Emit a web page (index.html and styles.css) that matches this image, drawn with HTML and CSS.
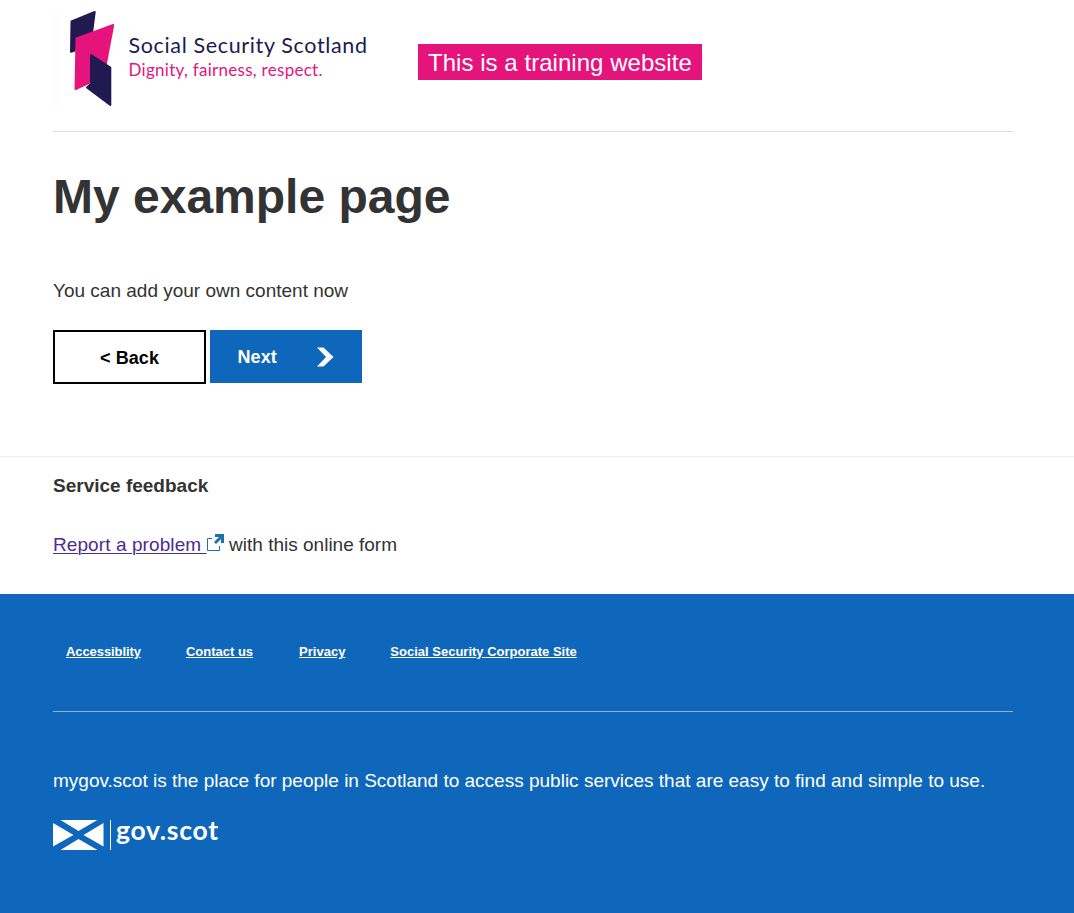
FILE: index.html
```html
<!DOCTYPE html>
<html lang="en">
<head>
<meta charset="utf-8">
<title>My example page</title>
<link rel="stylesheet" href="styles.css">
</head>
<body>
<header class="header wrapper">
  <svg class="logo" width="318" height="108" viewBox="53 0 318 108" role="img" aria-label="Social Security Scotland">
    <path class="panel" d="M53 10h8v98h-8z"/>
    <g stroke-linejoin="round" stroke-width="2">
      <path class="navy" d="M71.5 21.5 94.7 12 92 33 76 39.5 74.8 50.5 71 51.8z"/>
      <path class="pink" d="M76.5 38.5 113.2 25 105.5 66 91 82 75.5 89z"/>
      <path class="navy" d="M91 55 110.3 67.5V105L87 87.5 91 84z"/>
    </g>
    <text class="logo-name" x="128.5" y="52.5" textLength="238.500">Social Security Scotland</text>
    <text class="logo-tag" x="128.5" y="76" textLength="194">Dignity, fairness, respect.</text>
  </svg>
  <div class="banner">This is a training website</div>
</header>
<main class="main wrapper">
  <h1 class="title">My example page</h1>
  <p class="intro">You can add your own content now</p>
  <div class="buttons">
    <button class="button back">&lt; Back</button>
    <button class="button next">Next
      <svg class="chevron" width="17" height="20" viewBox="0 0 17 20"><path fill="#fff" d="M0 .5h6.500L16.500 10 6.500 19.500H0L9 10z"/></svg>
    </button>
  </div>
</main>
<section class="feedback">
  <div class="wrapper">
    <h2 class="feedback-title">Service feedback</h2>
    <p class="report"><a class="report-link" href="#">Report a problem </a><svg class="external" width="18" height="18" viewBox="0 0 18 18"><path fill="none" stroke="#1d70a8" d="M5 4.500H.5v12h12V12"/><path fill="#1d70a8" d="M8 0h9v9h-3V5l-5 5-2-2 5-5H8z"/></svg><span>with this online form</span></p>
  </div>
</section>
<footer class="footer">
  <div class="wrapper">
    <nav class="links">
      <a class="tight" href="#">Accessiblity</a>
      <a href="#">Contact us</a>
      <a href="#">Privacy</a>
      <a href="#">Social Security Corporate Site</a>
    </nav>
    <p class="about">mygov.scot is the place for people in Scotland to access public services that are easy to find and simple to use.</p>
    <svg class="gov" width="180" height="40" viewBox="53 812 180 40" role="img" aria-label="gov.scot">
      <path fill="#fff" d="M60.500 820H97.500L78.500 831zM60.500 850H97.500L78.500 839zM53 823 73.500 835 53 846.500zM103.500 823 83.500 835 103.500 846.500z"/>
      <path fill="#fff" d="M110 820h1v30h-1z"/>
      <text class="gov-name" x="116" y="840" textLength="102">gov.scot</text>
    </svg>
  </div>
</footer>
</body>
</html>
```
FILE: styles.css
```css
* { box-sizing: border-box; }
body {
  margin: 0;
  background: #fff;
  color: #333;
  font: 19px/28px "Liberation Sans", Arial, sans-serif;
}
h1, h2, p { margin: 0; }
.wrapper { width: 960px; margin-left: 53px; }

.header {
  display: flex;
  align-items: flex-start;
  gap: 47px;
  height: 132px;
  border-bottom: 1px solid #ddd;
}
.panel { fill: #fdfdfd; }
.navy { fill: #211a50; stroke: #211a50; }
.pink { fill: #e5147d; stroke: #e5147d; }
.logo-name { font: 21.5px Lato, sans-serif; fill: #211a50; }
.logo-tag { font: 17px Lato, sans-serif; fill: #e5147d; }
.banner {
  width: 284px;
  height: 36px;
  margin-top: 44px;
  padding-left: 10px;
  background: #e5147d;
  color: #fff;
  font-size: 24px;
  letter-spacing: 0.04px;
  line-height: 37px;
  white-space: nowrap;
}

.main { height: 324px; padding-top: 36px; }
.title { font-size: 48px; line-height: 58px; }
.intro { margin-top: 51px; }
.buttons { display: flex; gap: 4px; margin-top: 25px; }
.button {
  font: bold 18px "Liberation Sans", Arial, sans-serif;
  letter-spacing: 0.1px;
  padding: 0;
  border: 0;
  border-radius: 0;
}
.back { width: 153px; height: 54px; padding-top: 2px; border: 2px solid #000; background: #fff; color: #000; }
.next {
  display: flex;
  align-items: center;
  justify-content: space-between;
  width: 152px;
  height: 53px;
  padding: 2px 28px 0 27.5px;
  background: #0f67bb;
  color: #fff;
}
.chevron { margin-bottom: 2px; }

.feedback { height: 138px; border-top: 1px solid #eee; padding-top: 15px; }
.feedback-title { font-size: 19px; line-height: 28px; }
.report { display: flex; align-items: flex-start; margin-top: 31px; }
.report-link {
  color: #4c2c92;
  letter-spacing: 0.09px;
  white-space: pre;
  text-underline-offset: 2px;
  text-decoration-thickness: 1px;
}
.external { margin: 3px 4.5px 0 0; }

.footer { height: 319px; background: #0f67bb; color: #fff; overflow: hidden; }
.links {
  display: flex;
  gap: 45px;
  height: 118px;
  padding: 44px 0 0 13px;
  border-bottom: 1px solid #8fb4dc;
  font-size: 13px;
  font-weight: bold;
}
.links a { color: #fff; }
.links .tight { letter-spacing: -0.08px; }
.links .tight + a { margin-right: 1px; }
.about { margin-top: 55px; white-space: nowrap; }
.gov { display: block; margin-top: 17px; }
.gov-name { font: bold 26.5px Lato, sans-serif; fill: #fff; }
```
